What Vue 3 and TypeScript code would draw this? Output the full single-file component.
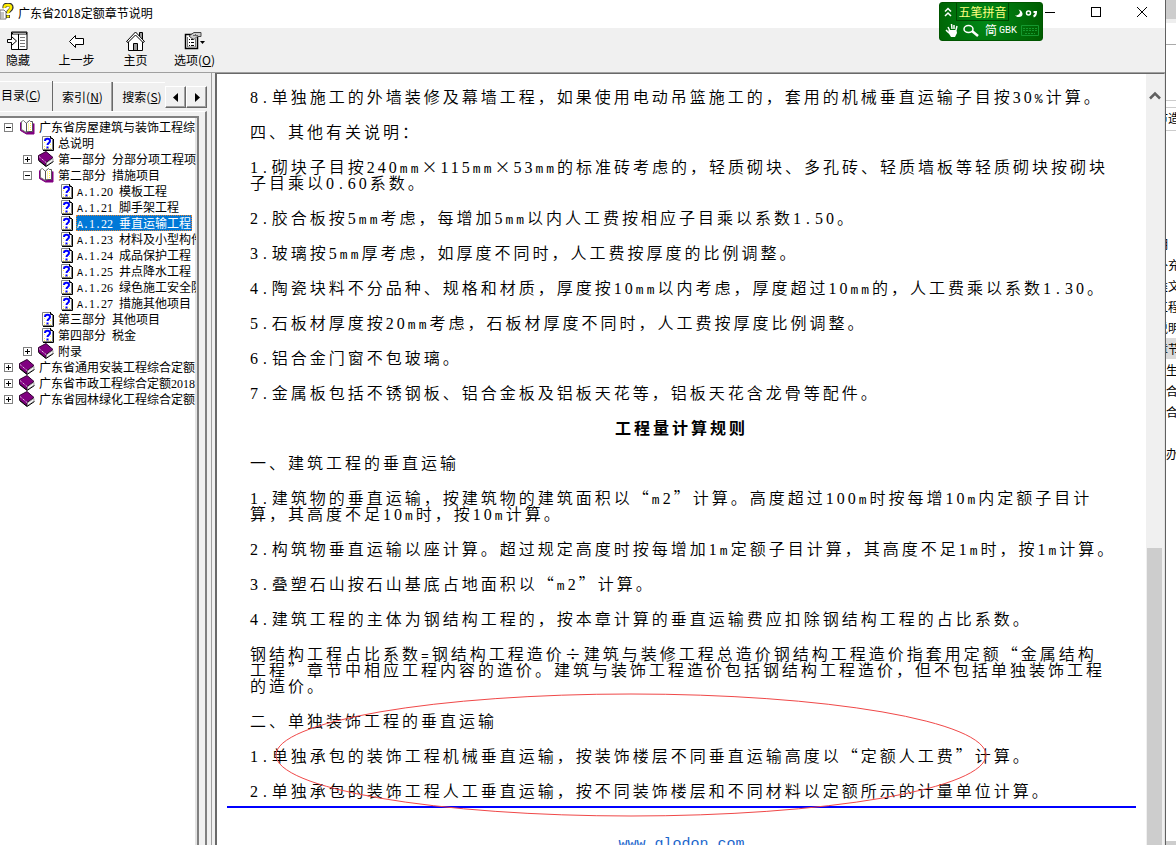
<script setup lang="ts">
import { computed } from 'vue'

type Run = { text: string; kind: 'digit' | 'latin' | 'wide' }
type IconKind = 'open' | 'closed' | 'page'
interface Node { level: number; icon: IconKind; label: string; toggle?: '+' | '-'; selected?: boolean }
interface Block { lines: string[]; heading?: boolean }

const tree: Node[] = [
  { level: 0, icon: 'open', toggle: '-', label: '广东省房屋建筑与装饰工程综' },
  { level: 1, icon: 'page', label: '总说明' },
  { level: 1, icon: 'closed', toggle: '+', label: '第一部分 分部分项工程项' },
  { level: 1, icon: 'open', toggle: '-', label: '第二部分 措施项目' },
  { level: 2, icon: 'page', label: 'A.1.20 模板工程' },
  { level: 2, icon: 'page', label: 'A.1.21 脚手架工程' },
  { level: 2, icon: 'page', label: 'A.1.22 垂直运输工程', selected: true },
  { level: 2, icon: 'page', label: 'A.1.23 材料及小型构件' },
  { level: 2, icon: 'page', label: 'A.1.24 成品保护工程' },
  { level: 2, icon: 'page', label: 'A.1.25 井点降水工程' },
  { level: 2, icon: 'page', label: 'A.1.26 绿色施工安全防' },
  { level: 2, icon: 'page', label: 'A.1.27 措施其他项目' },
  { level: 1, icon: 'page', label: '第三部分 其他项目' },
  { level: 1, icon: 'page', label: '第四部分 税金' },
  { level: 1, icon: 'closed', toggle: '+', label: '附录' },
  { level: 0, icon: 'closed', toggle: '+', label: '广东省通用安装工程综合定额' },
  { level: 0, icon: 'closed', toggle: '+', label: '广东省市政工程综合定额2018' },
  { level: 0, icon: 'closed', toggle: '+', label: '广东省园林绿化工程综合定额' },
]

const blocks: Block[] = [
  { lines: ['8.单独施工的外墙装修及幕墙工程，如果使用电动吊篮施工的，套用的机械垂直运输子目按30%计算。'] },
  { lines: ['四、其他有关说明：'] },
  { lines: ['1.砌块子目按240mm×115mm×53mm的标准砖考虑的，轻质砌块、多孔砖、轻质墙板等轻质砌块按砌块', '子目乘以0.60系数。'] },
  { lines: ['2.胶合板按5mm考虑，每增加5mm以内人工费按相应子目乘以系数1.50。'] },
  { lines: ['3.玻璃按5mm厚考虑，如厚度不同时，人工费按厚度的比例调整。'] },
  { lines: ['4.陶瓷块料不分品种、规格和材质，厚度按10mm以内考虑，厚度超过10mm的，人工费乘以系数1.30。'] },
  { lines: ['5.石板材厚度按20mm考虑，石板材厚度不同时，人工费按厚度比例调整。'] },
  { lines: ['6.铝合金门窗不包玻璃。'] },
  { lines: ['7.金属板包括不锈钢板、铝合金板及铝板天花等，铝板天花含龙骨等配件。'] },
  { lines: ['工程量计算规则'], heading: true },
  { lines: ['一、建筑工程的垂直运输'] },
  { lines: ['1.建筑物的垂直运输，按建筑物的建筑面积以“m2”计算。高度超过100m时按每增10m内定额子目计', '算，其高度不足10m时，按10m计算。'] },
  { lines: ['2.构筑物垂直运输以座计算。超过规定高度时按每增加1m定额子目计算，其高度不足1m时，按1m计算。'] },
  { lines: ['3.叠塑石山按石山基底占地面积以“m2”计算。'] },
  { lines: ['4.建筑工程的主体为钢结构工程的，按本章计算的垂直运输费应扣除钢结构工程的占比系数。'] },
  { lines: ['钢结构工程占比系数=钢结构工程造价÷建筑与装修工程总造价钢结构工程造价指套用定额“金属结构', '工程”章节中相应工程内容的造价。建筑与装饰工程造价包括钢结构工程造价，但不包括单独装饰工程', '的造价。'] },
  { lines: ['二、单独装饰工程的垂直运输'] },
  { lines: ['1.单独承包的装饰工程机械垂直运输，按装饰楼层不同垂直运输高度以“定额人工费”计算。'] },
  { lines: ['2.单独承包的装饰工程人工垂直运输，按不同装饰楼层和不同材料以定额所示的计量单位计算。'] },
]

// Splits a line so that digits and other half-width characters use faces of half an em.
const split = (s: string): Run[] =>
  (s.match(/[0-9]+|[\x20-\x2f\x3a-\x7e]+|[^\x20-\x7e]+/g) ?? []).map(text => ({
    text,
    kind: /^[0-9]/.test(text) ? 'digit' : /^[\x20-\x7e]/.test(text) ? 'latin' : 'wide',
  }))

const rows = computed(() => tree.map(n => ({ ...n, runs: split(n.label) })))
const paragraphs = computed(() => blocks.map(b => ({ heading: b.heading, lines: b.lines.map(split) })))

const behind = ['明', '补充', '类文', '工程', '说明', '章节', '生', '合', '合', '', '办']
</script>

<template>
  <div class="desktop" lang="zh-CN">
    <div class="window">
      <header class="titlebar">
        <svg class="app-icon" width="14" height="18" viewBox="0 0 14 18">
          <path d="M0 7h4l2 2v7H0z" fill="#fff" stroke="#777" />
          <path d="M0 10h4M0 12h4M0 14h4" stroke="#888" />
          <path d="M4.500 5C4 2 6 1.500 8 1.500s4 1 3.500 3.500S8 7.500 8 10M8 12v3" fill="none" stroke="#333" stroke-width="4" />
          <path d="M4.500 5C4 2 6 2 8 2s3.500 1 3 3S8 7.500 8 10.500M8 12.500v2" fill="none" stroke="#ffee00" stroke-width="2.500" />
        </svg>
        <h1>广东省2018定额章节说明</h1>
        <div class="controls">
          <button aria-label="最小化"><svg width="12" height="12"><path d="M1 6.500h10" stroke="#000" /></svg></button>
          <button aria-label="最大化"><svg width="12" height="12"><rect x="1.500" y="1.500" width="9" height="9" fill="none" stroke="#000" /></svg></button>
          <button aria-label="关闭"><svg width="12" height="12"><path d="M1 1l10 10M11 1L1 11" stroke="#000" /></svg></button>
        </div>
      </header>

      <nav class="toolbar">
        <button class="tool">
          <svg width="22" height="20" viewBox="0 0 22 20">
            <path d="M4.500 1v17.500h15.500V1z" fill="#fff" stroke="#000" />
            <path d="M4 2.500h16" stroke="#000" stroke-width="2" /><path d="M6 2.500h13" stroke="#aaa" />
            <path d="M11.500 3v15" stroke="#000" />
            <path d="M13 6.500h5M13 9.500h5M13 12.500h5M13 15.500h5" stroke="#777" />
            <path d="M.5 8.500h4v-3l5 4.500-5 4.500v-3h-4z" fill="#fff" stroke="#000" />
          </svg>隐藏</button>
        <button class="tool">
          <svg width="22" height="20" viewBox="0 0 22 20"><path d="M3.500 10.500l6-6v3h8v6h-8v3z" fill="#fff" stroke="#000" /></svg>上一步</button>
        <button class="tool">
          <svg width="22" height="20" viewBox="0 0 22 20">
            <path d="M14.500 5V1.500h3V8" fill="#999" stroke="#000" />
            <path d="M3.500 10v9.500h14V10L10.500 3z" fill="#fff" stroke="#000" />
            <path d="M1.500 10.500l9-9.500 9 9.500-1.500 1L10.500 4 3 11.500z" fill="#fff" stroke="#000" />
            <path d="M8.500 19v-6.500h4V19" fill="#999" stroke="#000" />
          </svg>主页</button>
        <button class="tool">
          <svg width="22" height="20" viewBox="0 0 22 20">
            <path d="M1.500 3.500h12v14h-12z" fill="#fff" stroke="#000" stroke-width="1.500" />
            <path d="M3.500 6v10h8V8" fill="none" stroke="#777" />
            <path d="M5 8.500h1M7 8.500h3M5 11.500h1M7 11.500h3M5 14.500h1M7 14.500h3" stroke="#000" />
            <path d="M5 5l5-3.500h7v4h-4l-3 3-2-1z" fill="#ccc" stroke="#444" />
            <path d="M9 4.500h5M11 3l3 3" stroke="#666" />
            <path d="M16 10h5l-2.500 3z" />
          </svg><span>选项(<u>O</u>)</span></button>
      </nav>

      <div class="body">
        <aside class="side">
          <div class="tabs" role="tablist">
            <button class="tab active" role="tab" aria-selected="true">目录(<u>C</u>)</button>
            <button class="tab" role="tab">索引(<u>N</u>)</button>
            <button class="tab last" role="tab">搜索(<u>S</u>)</button>
            <button class="spin" aria-label="向左"><svg width="6" height="9"><path d="M5 0v9L0 4.500z" /></svg></button>
            <button class="spin" aria-label="向右"><svg width="6" height="9"><path d="M1 0v9l5-4.500z" /></svg></button>
          </div>
          <div class="tabpage">
            <ul class="tree">
              <li v-for="n in rows" :key="n.label" :class="'level' + n.level">
                <span class="toggle-cell">
                  <button v-if="n.toggle" class="toggle" :aria-label="n.toggle === '+' ? '展开' : '折叠'">
                    <svg width="7" height="7"><path d="M1 3.500h5" stroke="#000" /><path v-if="n.toggle === '+'" d="M3.500 1v5" stroke="#000" /></svg>
                  </button>
                </span>
                <svg v-if="n.icon === 'page'" class="icon" width="16" height="16" viewBox="0 0 16 16">
                  <path d="M4.500 1.500h8l2 2v11h-10z" fill="#fff" stroke="#808080" />
                  <path d="M15.500 4v11.500H5M12.500 1v2.500H15" fill="none" stroke="#000" />
                  <path d="M6 3.500h6M6 7.500h2M6 11.500h2M12 9.500h2M6 13.500h8" stroke="#ffee55" stroke-dasharray="1 1" />
                  <path d="M7 6c0-3 5-3 5 0 0 2-2.500 2-2.500 4M9.500 11.500v2" fill="none" stroke="#00f" stroke-width="2" />
                </svg>
                <svg v-else-if="n.icon === 'closed'" class="icon" width="16" height="16" viewBox="0 0 16 16">
                  <path d="M.5 4.500L8 .5l7 6-7 5v3.500L.5 9z" fill="#800080" stroke="#300030" />
                  <path d="M8.500 12L15 7.500V10l-6.500 4.500z" fill="#fff" stroke="#555" stroke-width=".5" />
                  <path d="M1 5.500l7 6" stroke="#fff" stroke-dasharray="1 1" />
                  <path d="M.5 9.500L8 15.500l7.500-5" fill="none" stroke="#000" />
                </svg>
                <svg v-else class="icon" width="16" height="16" viewBox="0 0 16 16">
                  <path d="M1.500 3.500v8l6 3.500H15V4.500" fill="#800080" stroke="#800080" />
                  <path d="M2.500 2.500l2-1 3 3v9l-5-3z" fill="#fff" stroke="#777" />
                  <path d="M7.500 13V4l3-2.500 1 1h2v10h-4z" fill="#fff" stroke="#555" />
                  <path d="M9.500 4.500v7M11.500 4v7" stroke="#ffee44" stroke-dasharray="1 1" />
                </svg>
                <a href="#" class="label" :class="{ selected: n.selected }"><span v-for="(r, i) in n.runs" :key="i" :class="r.kind">{{ r.text }}</span></a>
              </li>
            </ul>
          </div>
        </aside>

        <main class="viewer">
          <article>
            <component :is="p.heading ? 'h2' : 'p'" v-for="(p, i) in paragraphs" :key="i">
              <span v-for="(line, j) in p.lines" :key="j" class="line"><span v-for="(r, k) in line" :key="k" :class="r.kind">{{ r.text }}</span></span>
            </component>
            <hr />
            <a class="site" href="#">www.glodon.com</a>
            <svg class="mark" width="712" height="124" viewBox="0 0 712 124"><ellipse cx="356" cy="62" rx="355" ry="61" fill="none" stroke="#f04848" /></svg>
          </article>
          <div class="scrollbar">
            <svg width="12" height="9" viewBox="0 0 12 9"><path d="M1 7.500l5-5 5 5" fill="none" stroke="#606060" stroke-width="2.500" /></svg>
            <div class="thumb"></div>
          </div>
        </main>
      </div>
    </div>

    <div class="behind">
      <div class="behind-top"></div>
      <div class="behind-bar"></div>
      <div class="behind-field"><span>市造</span></div>
      <ul>
        <li v-for="(t, i) in behind" :key="i" :class="{ current: i === 5, single: i > 5 }"><span>{{ t }}</span></li>
      </ul>
      <div class="behind-bottom"></div>
    </div>

    <div class="ime">
      <div class="ime-row">
        <svg width="16" height="18" viewBox="0 0 16 18"><path d="M5 8.500l3-3 3 3M5 13l3-3 3 3" fill="none" stroke="#fff" stroke-width="1.500" /></svg>
        <span class="ime-name">五笔拼音</span>
        <svg width="33" height="18" viewBox="0 0 33 18">
          <path d="M9.500 6.500c3 3 1 6-3.500 6 4 3 8 1 7.500-2-.5-2.500-2-3.500-4-4z" fill="#fff" />
          <circle cx="19.500" cy="10" r="2" fill="none" stroke="#fff" stroke-width="1.500" />
          <path d="M24.500 9H27c0 3-1 4-2.500 4.500" fill="none" stroke="#fff" stroke-width="2" />
        </svg>
      </div>
      <div class="ime-row second">
        <svg width="43" height="18" viewBox="0 0 43 18">
          <path d="M9.500 9L8 6M12 8l-.5-5M14 8V4M16 9l1-4M9 12L6 9" fill="none" stroke="#fff" stroke-width="1.500" />
          <path d="M8.500 9h8l.5 3-2 4h-4l-2.500-4z" fill="#fff" />
          <ellipse cx="28.500" cy="8" rx="4.500" ry="3.500" fill="none" stroke="#fff" stroke-width="1.500" />
          <path d="M32 10l6 5" stroke="#fff" stroke-width="2.500" />
        </svg>
        <span>简</span><span class="gbk">GBK</span>
        <svg width="20" height="18" viewBox="0 0 20 18">
          <path d="M1.500 4.500h17v10h-17z" fill="none" stroke="#15982f" />
          <path d="M3 7.500h14M3 9.500h14M5 12.500h10" stroke="#15982f" stroke-dasharray="2 1" />
        </svg>
      </div>
    </div>
  </div>
</template>

<style>
html, body { margin: 0; overflow: hidden; }
</style>

<style scoped>
* { box-sizing: border-box; }
button { margin: 0; padding: 0; border: 0; background: none; color: inherit; font: inherit; }
svg { display: block; flex: none; }
ul { list-style: none; margin: 0; padding: 0; }
.desktop {
  position: relative;
  display: grid;
  grid-template-columns: minmax(0, 1fr) 10px;
  height: 100vh;
  overflow: hidden;
  background: #fff;
  color: #000;
  font: 12px/16px "Noto Sans CJK SC", sans-serif;
}
.window { display: flex; flex-direction: column; min-height: 0; border-right: 1px solid #606060; background: #f0f0f0; }
.titlebar { display: flex; align-items: center; height: 28px; flex: none; background: #fff; }
.app-icon { margin: 0 4px 4px 0; }
h1 { flex: 1; margin: 0 0 2px; font-size: 12px; font-weight: 400; }
.controls { display: flex; margin-bottom: 4px; }
.controls button { display: grid; place-items: center; width: 46px; height: 24px; }
.toolbar { display: flex; flex: none; height: 44px; }
.tool { display: flex; flex-direction: column; align-items: center; gap: 1px; width: 59px; padding-top: 3px; }
.tool:first-child { width: 48px; margin-left: -6px; margin-right: 5px; }
.body { display: flex; flex: 1; min-height: 0; border-top: 1px solid #a0a0a0; }
.side { display: flex; flex-direction: column; width: 207px; flex: none; margin-right: 4px; padding-top: 8px; }
.tabs { display: flex; align-items: flex-end; height: 30px; flex: none; }
.tab { height: 29px; width: 60px; border-right: 1px solid #696969; box-shadow: inset -1px 0 #a0a0a0, inset 0 1px #fff; white-space: nowrap; }
.tab.active { width: 53px; height: 30px; padding: 0 10px 3px 0; box-shadow: inset 0 1px #fff; }
.tab.last { width: 52px; border-right: 0; padding-left: 6px; box-shadow: inset 0 1px #fff; }
.spin { display: grid; place-items: center; width: 21px; height: 22px; margin-bottom: 3px; border: 1px solid; border-color: #fff #696969 #696969 #fff; box-shadow: inset -1px -1px #a0a0a0; }
.tabpage { flex: 1; min-height: 0; padding: 4px 6px 0 0; border-top: 1px solid #fff; border-right: 2px solid #808080; }
.tree { height: 100%; overflow: hidden; padding-top: 1px; border-top: 2px solid #808080; border-right: 2px solid #808080; background: #fff; box-shadow: inset -2px 0 #e3e3e3; }
.tree li { display: flex; align-items: center; height: 16px; margin-right: 1px; overflow: hidden; padding-left: 4px; }
.tree .level1 { padding-left: 23px; }
.tree .level2 { padding-left: 42px; }
.toggle-cell { width: 15px; flex: none; }
.toggle { display: grid; place-items: center; width: 9px; height: 9px; border: 1px solid #808080; }
.icon { margin-right: 3px; }
.label { height: 16px; padding: 0 1px; color: #000; text-decoration: none; white-space: nowrap; }
.latin, .digit { line-height: 0; }
.latin { font-family: "Liberation Mono", monospace; }
.digit { font-family: "Liberation Serif", serif; }
.label .latin { font-size: 10px; }
.label.selected { background: #0078d7; color: #fff; outline: 1px dotted #e08030; outline-offset: -1px; }
.viewer { display: flex; flex: 1; min-width: 0; border-left: 1px solid #a0a0a0; }
article {
  position: relative;
  flex: 1;
  min-width: 0;
  overflow: hidden;
  padding: 14px 10px 0;
  border-left: 2px solid #696969;
  border-top: 1px solid #696969;
  margin-left: 3px;
  background: #fff;
  text-spacing-trim: space-all;
}
p, h2 { margin: 0 23px 19px; font-size: 16px; font-weight: 350; line-height: 16px; letter-spacing: 3px; }
h2 { font-weight: 700; text-align: center; }
.line { display: block; white-space: nowrap; }
.line .latin { font-size: 13px; }
hr { height: 2px; margin: -11px 0 28px; border: 0; background: #00f; }
.site { display: block; font: 15px/18px "Liberation Mono", monospace; text-align: center; text-decoration: none; color: #1a66cc; }
.mark { position: absolute; left: 58px; top: 619px; }
.scrollbar { display: flex; flex-direction: column; align-items: center; width: 19px; flex: none; padding: 17px 1px 0 0; border-top: 1px solid #696969; border-right: 1px solid #e3e3e3; background: #f0f0f0; }
.thumb { width: 15px; flex: 1; margin-top: 448px; background: #cdcdcd; }
.behind { display: flex; flex-direction: column; overflow: hidden; font-size: 12px; }
.behind-top { height: 19px; flex: none; background: #cdcdcd; }
.behind-bar { height: 82px; flex: none; border-bottom: 1px solid #ccc; background: linear-gradient(#eee 0 4px, #fff 4px 25px, #aaa 25px 26px, #fff 26px); }
.behind-field { height: 24px; flex: none; margin: 6px 0 102px; border: 1px solid #ccc; border-width: 1px 0; line-height: 20px; }
.behind li { height: 21px; line-height: 21px; }
.behind span { display: block; width: 24px; margin-left: -10px; white-space: nowrap; }
.behind .single span { margin-left: 0; }
.behind .current { background: #dadada; }
.behind-bottom { height: 4px; margin-top: auto; background: #cdcdcd; }
.ime { position: absolute; right: 133px; top: 2px; width: 104px; height: 39px; overflow: hidden; border: 1px solid #005500; border-radius: 3px; background: radial-gradient(circle at 45% 45%, #008a18, #005c00); color: #fff; }
.ime-row { display: flex; align-items: center; height: 18px; }
.ime-row.second { gap: 2px; }
.ime-name { width: 54px; height: 18px; border: 1px solid #004800; border-top: 0; color: #ffff80; text-align: center; line-height: 17px; }
.gbk { width: 19px; font: 10px/16px "Liberation Mono", monospace; padding-top: 2px; }
</style>
